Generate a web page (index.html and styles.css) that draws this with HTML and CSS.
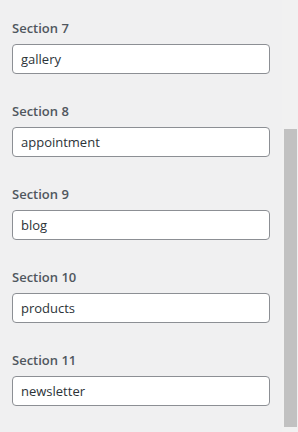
FILE: index.html
```html
<!DOCTYPE html>
<html lang="en">
<head>
    <meta charset="UTF-8" />
    <title>Section names</title>
    <link rel="stylesheet" href="styles.css">
</head>
<body>
    <div class="panel">
        <div class="field">
            <label class="field-label" for="s7">Section 7</label>
            <input class="field-input" id="s7" type="text" value="gallery" />
        </div>
        <div class="field">
            <label class="field-label" for="s8">Section 8</label>
            <input class="field-input" id="s8" type="text" value="appointment" />
        </div>
        <div class="field">
            <label class="field-label" for="s9">Section 9</label>
            <input class="field-input" id="s9" type="text" value="blog" />
        </div>
        <div class="field">
            <label class="field-label" for="s10">Section 10</label>
            <input class="field-input" id="s10" type="text" value="products" />
        </div>
        <div class="field">
            <label class="field-label" for="s11">Section 11</label>
            <input class="field-input" id="s11" type="text" value="newsletter" />
        </div>
    </div>

    <div class="scroll-track">
        <div class="scroll-thumb"></div>
    </div>
</body>
</html>
```

FILE: styles.css
```css
* {
    margin: 0;
    padding: 0;
    box-sizing: border-box;
}

body {
    background: #f0f0f1;
    font-family: "Open Sans", "Noto Sans", sans-serif;
    height: 100vh;
    overflow: hidden;
}

.panel {
    display: flex;
    flex-direction: column;
    gap: 27px;
    padding: 18px 28px 0 12px;
}

.field {
    display: flex;
    flex-direction: column;
    gap: 6px;
}

.field-label {
    font-size: 13px;
    line-height: 20px;
    font-weight: 600;
    color: #50575e;
}

.field-input {
    width: 258px;
    height: 30px;
    padding: 0 8px;
    border: 1px solid #8c8f94;
    border-radius: 4px;
    background: #fff;
    font-family: inherit;
    font-size: 13px;
    color: #2c3338;
    outline: none;
}

.scroll-track {
    position: fixed;
    top: 0;
    right: 0;
    width: 16px;
    height: 100%;
    background: #f1f1f1;
}

.scroll-thumb {
    position: absolute;
    top: 129px;
    left: 2px;
    width: 13px;
    height: 298px;
    background: #c1c1c1;
}
```
